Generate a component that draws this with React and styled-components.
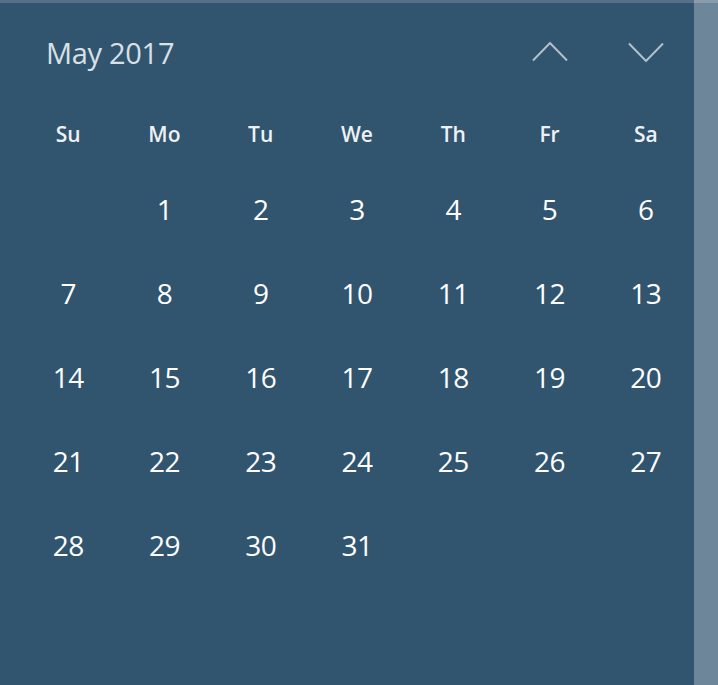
import React from "react";
import styled, { createGlobalStyle } from "styled-components";

const Global = createGlobalStyle`
  html, body { margin: 0; padding: 0; background: #31546f; }
  * { box-sizing: border-box; }
`;

const Frame = styled.div`
  width: 718px;
  height: 685px;
  display: flex;
  overflow: hidden;
  font-family: "Open Sans", "Noto Sans", sans-serif;
`;

const Panel = styled.div`
  flex: 1;
  display: flex;
  flex-direction: column;
  background: #31546f;
  border-top: 3px solid #587087;
  padding-left: 20px;
`;

const Strip = styled.div`
  width: 24px;
  background: #6d8699;
  border-top: 3px solid #8a9cab;
`;

const Grid = styled.div`
  display: grid;
  grid-template-columns: repeat(7, 1fr);
  grid-auto-rows: ${(p) => p.$row}px;
  align-items: center;
  justify-items: center;
`;

const Title = styled.div`
  grid-column: 1 / span 5;
  justify-self: start;
  padding-left: 26px;
  font-size: 29px;
  font-weight: 400;
  color: #d9e0e6;
  letter-spacing: -0.3px;
`;

const NavButton = styled.div`
  width: 40px;
  height: 30px;
  display: flex;
  align-items: center;
  justify-content: center;
`;

const DayName = styled.div`
  font-size: 21px;
  font-weight: 600;
  color: #eef1f4;
`;

const DateCell = styled.div`
  font-size: 28px;
  font-weight: 400;
  color: #ffffff;
  letter-spacing: -0.5px;
`;

const Chevron = ({ up }) => (
  <svg width="36" height="20" viewBox="0 0 36 20">
    <polyline
      points={up ? "1,18.5 18,1 35,18.5" : "1,1.5 18,19 35,1.5"}
      fill="none"
      stroke="#b3c0cb"
      strokeWidth="2"
    />
  </svg>
);

const days = ["Su", "Mo", "Tu", "We", "Th", "Fr", "Sa"];
const cells = [null, ...Array.from({ length: 31 }, (_, i) => i + 1)];

export default function App() {
  return (
    <Frame>
      <Global />
      <Panel>
        <Grid $row={98}>
          <Title>May 2017</Title>
          <NavButton>
            <Chevron up />
          </NavButton>
          <NavButton>
            <Chevron />
          </NavButton>
        </Grid>
        <Grid $row={66}>
          {days.map((d) => (
            <DayName key={d}>{d}</DayName>
          ))}
        </Grid>
        <Grid $row={84}>
          {cells.map((c, i) => (
            <DateCell key={i}>{c ?? ""}</DateCell>
          ))}
        </Grid>
      </Panel>
      <Strip />
    </Frame>
  );
}
